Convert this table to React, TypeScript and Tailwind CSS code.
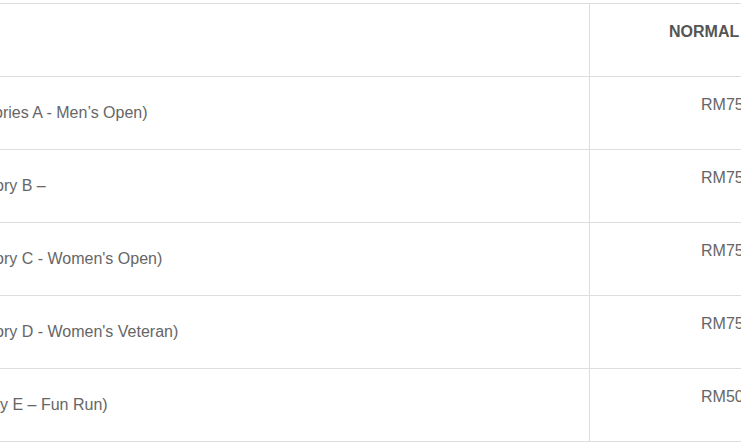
const rows = [
  { label: 'ories A - Men’s Open)', price: 'RM75', shift: 'ml-[-6px]' },
  { label: 'ory B –', price: 'RM75', shift: 'ml-[-5px]' },
  { label: 'ory C - Women\'s Open)', price: 'RM75', shift: 'ml-[-5px]' },
  { label: 'ory D - Women\'s Veteran)', price: 'RM75', shift: 'ml-[-5px]' },
  { label: 'y E – Fun Run)', price: 'RM50', shift: 'ml-0' },
]

export default function App() {
  return (
    <div className="w-[741px] h-[446px] overflow-hidden bg-white pt-[3px] font-['Liberation_Sans',Arial,sans-serif] text-[16px] leading-6 text-[#666]">
      <div className="border-t border-[#ddd]">
        {/* header */}
        <div className="flex h-[73px] border-b border-[#ddd]">
          <div className="w-[590px] shrink-0 border-r border-[#ddd]" />
          <div className="flex-1 whitespace-nowrap pl-[79px] pt-[16px] font-bold text-[#555]">NORMAL</div>
        </div>
        {rows.map((row, i) => (
          <div key={i} className="flex h-[73px] border-b border-[#ddd]">
            <div className="flex w-[590px] shrink-0 items-center overflow-hidden whitespace-nowrap border-r border-[#ddd]">
              <span className={row.shift}>{row.label}</span>
            </div>
            <div className="flex-1 whitespace-nowrap pl-[111px] pt-[16px]">{row.price}</div>
          </div>
        ))}
      </div>
    </div>
  )
}
